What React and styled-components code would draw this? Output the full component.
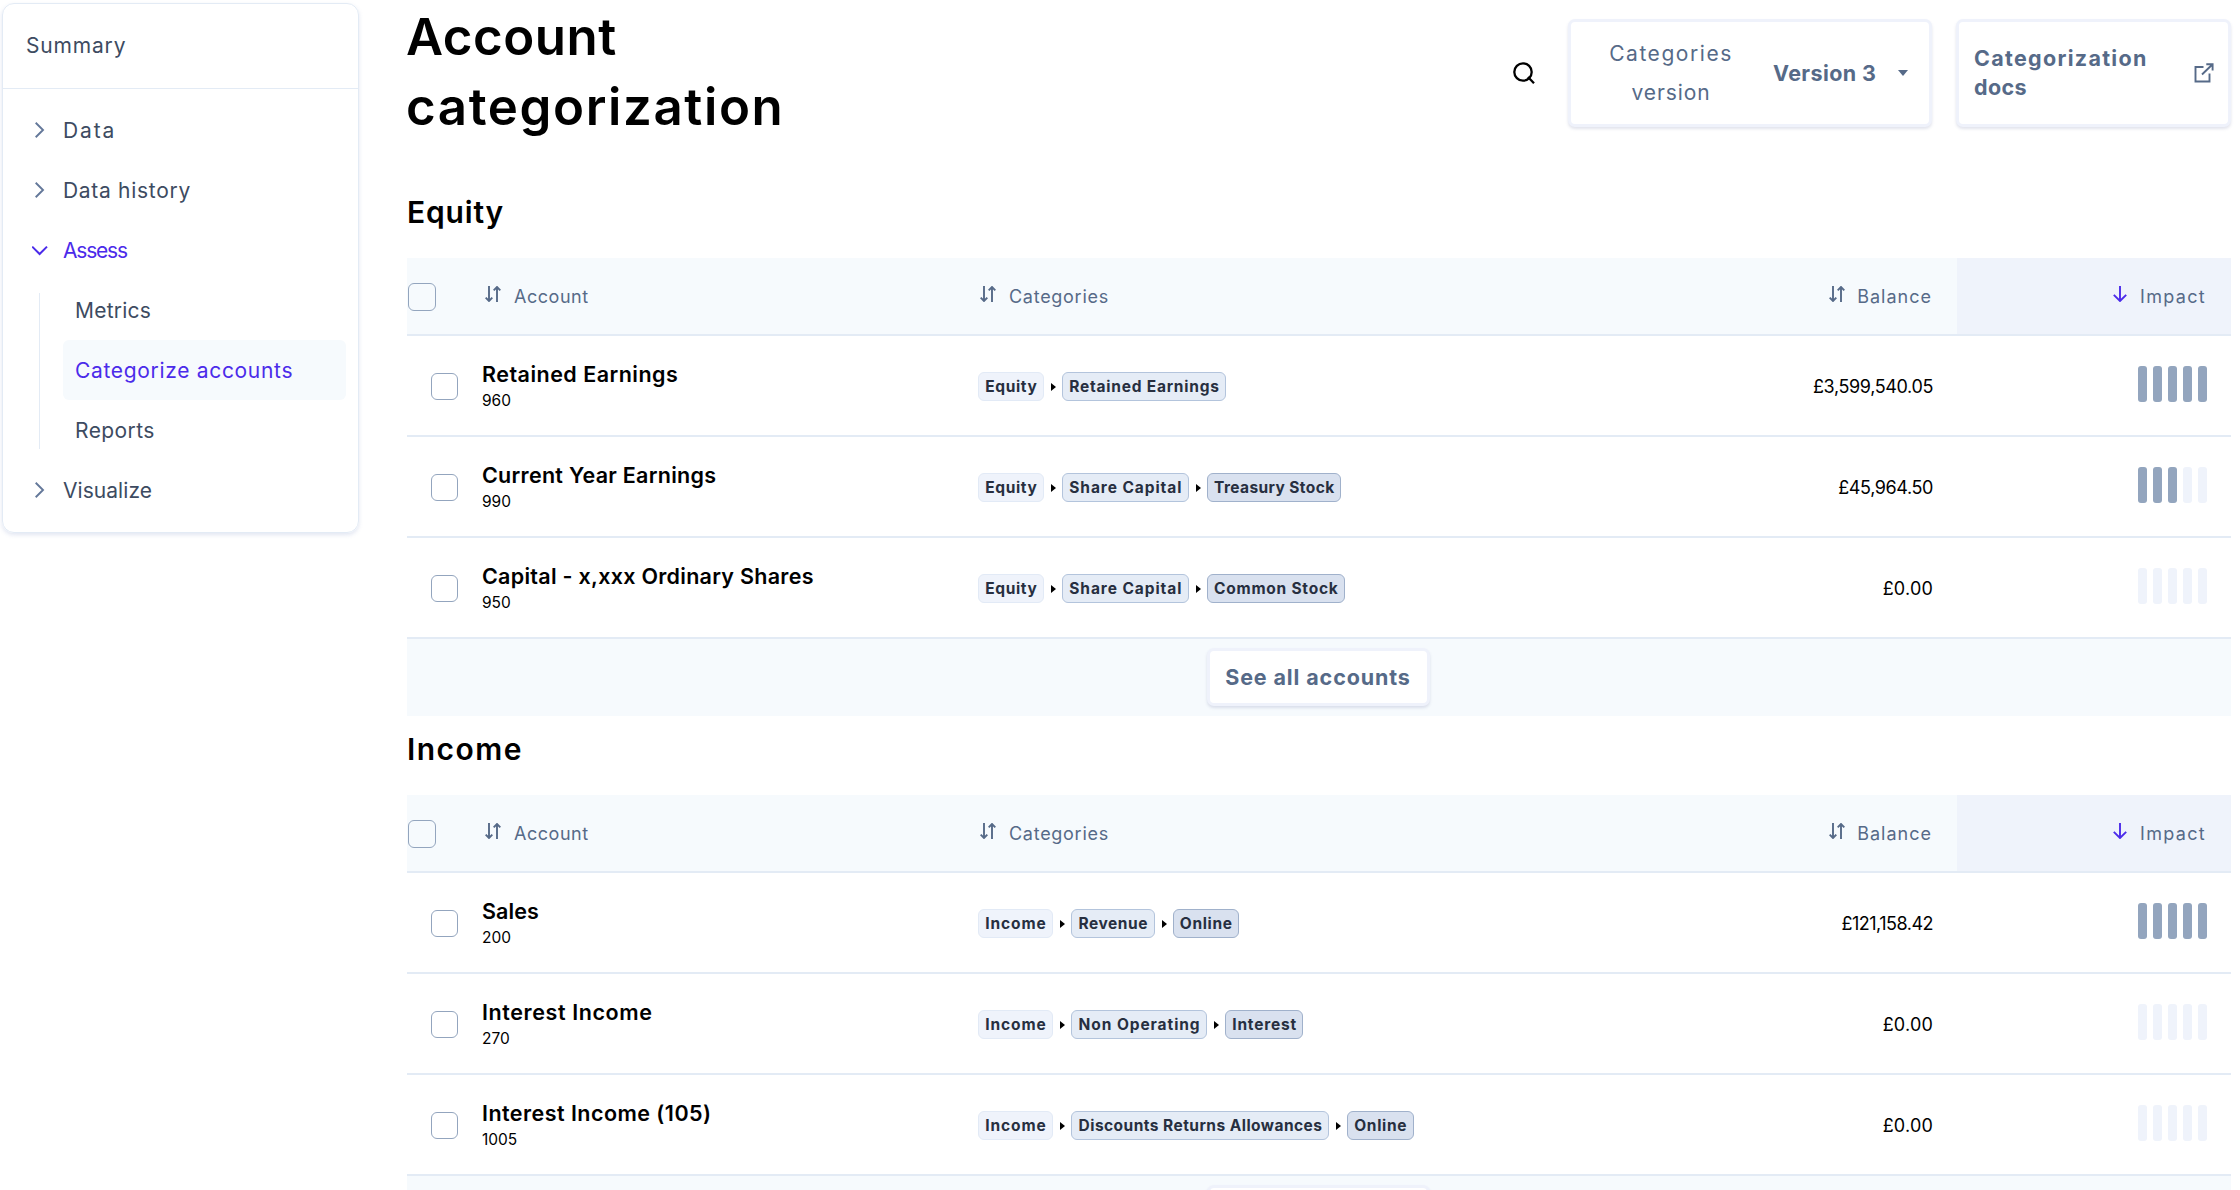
import React from "react";
import styled, { createGlobalStyle } from "styled-components";

const c = {
  text: "#3d4b61",
  muted: "#566a88",
  accent: "#4b2bea",
  line: "#e3ebf5",
  panel: "#f6fafd",
  soft: "#eff3fb",
  outline: "#93a5be",
};

const GlobalStyle = createGlobalStyle`
  * { box-sizing: border-box; }
  body {
    margin: 0;
    overflow: hidden;
    background: #fff;
    color: #000;
    font-family: Inter, "Liberation Sans", sans-serif;
  }
  svg { display: block; flex: none; }
  h1, h2 { margin: 0; }
`;

const Page = styled.div`
  display: flex;
  align-items: flex-start;
  height: 1190px;
  overflow: hidden;
`;

const Track = styled.span`
  letter-spacing: ${(p) => p.$ls || 0}px;
  white-space: nowrap;
`;

/* Sidebar */
const Sidebar = styled.aside`
  flex: none;
  width: 357px;
  margin: 3px 48px 0 2px;
  border: 1px solid ${c.line};
  border-radius: 12px;
  box-shadow: 0 2px 4px rgba(110, 130, 190, 0.2);
  color: ${c.text};
  font-size: 21px;
`;

const SidebarHeader = styled.div`
  padding-left: 23px;
  height: 85px;
  line-height: 84px;
  border-bottom: 1px solid ${c.line};
`;

const Nav = styled.nav`
  padding: 11px 12px 12px 29px;
`;

const NavItem = styled.div`
  display: flex;
  align-items: center;
  gap: ${(p) => (p.$tight ? 15 : 16)}px;
  height: 60px;
  color: ${(p) => (p.$active ? c.accent : c.text)};
  svg { color: ${(p) => (p.$active ? c.accent : "#64789a")}; }
`;

const SubNav = styled.div`
  display: flex;
`;

const Rail = styled.div`
  width: 1px;
  margin: 13px 23px 11px 7px;
  background: ${c.line};
`;

const SubList = styled.div`
  flex: 1;
`;

const SubItem = styled.div`
  height: 60px;
  padding-top: 1px;
  line-height: 60px;
  padding-left: 12px;
  border-radius: 6px;
  color: ${(p) => (p.$active ? c.accent : c.text)};
  background: ${(p) => (p.$active ? c.panel : "transparent")};
`;

/* Header */
const Main = styled.main`
  width: 1824px;
`;

const Header = styled.header`
  display: flex;
  justify-content: space-between;
  height: 179px;
`;

const Title = styled.h1`
  width: 420px;
  padding-top: 2px;
  font-size: 51px;
  line-height: 70px;
  font-weight: 600;
  margin-left: -1px;
`;

const Toolbar = styled.div`
  display: flex;
  align-items: center;
  height: 108px;
  margin-top: 19px;
`;

const SearchButton = styled.div`
  margin-right: 33px;
`;

const Card = styled.div`
  display: flex;
  align-items: center;
  background: #fff;
  border: 3px solid #eff2fb;
  border-radius: 7px;
  box-shadow: 0 2px 3px rgba(90, 100, 150, 0.18);
  color: ${c.muted};
  font-size: 21.5px;
  font-weight: 700;
`;

const VersionSelect = styled(Card)`
  width: 364px;
  height: 108px;
  margin-right: 24px;
  padding-left: 34px;
`;

const SelectLabel = styled.div`
  width: 132px;
  margin-right: 36px;
  text-align: center;
  font-size: 21px;
  line-height: 39px;
  font-weight: 400;
`;

const Caret = styled.span`
  margin-left: 22px;
  border: 5.5px solid transparent;
  border-top: 6px solid ${c.muted};
  border-bottom: 0;
`;

const DocsLink = styled(Card)`
  width: 275px;
  height: 108px;
  padding: 0 14px 0 15px;
  justify-content: space-between;
  line-height: 29px;
`;

/* Tables */
const SectionTitle = styled.h2`
  height: 79px;
  font-size: 30px;
  line-height: 66px;
  font-weight: 600;
`;

const gridColumns = "75px 496px 1fr 300px 274px";

const HeadRow = styled.div`
  display: grid;
  grid-template-columns: ${gridColumns};
  height: 78px;
  background: ${c.panel};
  border-bottom: 2px solid ${c.line};
`;

const HeadCell = styled.div`
  display: flex;
  align-items: center;
  justify-content: ${(p) => (p.$end ? "flex-end" : "flex-start")};
  padding: 0 ${(p) => (p.$end ? 25 : 0)}px 0 ${(p) => p.$left || 0}px;
  gap: ${(p) => p.$gap || 12}px;
  color: ${c.muted};
  background: ${(p) => (p.$sorted ? c.soft : "transparent")};
  font-size: 18px;
  svg { margin-top: -4px; }
`;

const Row = styled.div`
  display: grid;
  grid-template-columns: ${gridColumns};
  align-items: center;
  height: 101px;
  padding-top: 1px;
  border-bottom: 2px solid ${c.line};
`;

const Checkbox = styled.div`
  width: ${(p) => (p.$head ? 28 : 27)}px;
  height: ${(p) => (p.$head ? 28 : 27)}px;
  margin: ${(p) => (p.$head ? "2px 0 0 1px" : "1px 0 0 24px")};
  border: 1px solid ${c.outline};
  border-radius: 6px;
`;

const AccountName = styled.div`
  font-size: 21.5px;
  line-height: 29px;
  font-weight: 600;
`;

const AccountCode = styled.div`
  font-size: 15.5px;
  line-height: 24px;
`;

const Path = styled.div`
  display: flex;
  align-items: center;
`;

const chipTones = [
  ["#eff3fb", "#e2eaf6"],
  ["#e5ecf6", "#b3c4dc"],
  ["#d9e1ef", "#a0b1cb"],
];

const Chip = styled.span`
  height: 29px;
  padding: 0 5.6px 0 6.2px;
  border: 1px solid ${(p) => chipTones[p.$level][1]};
  border-radius: 6px;
  background: ${(p) => chipTones[p.$level][0]};
  color: #272f40;
  font-size: 15.5px;
  line-height: 27px;
  font-weight: 700;
`;

const Separator = styled.span`
  margin: 1px 6px 0 7px;
  border: 4.5px solid transparent;
  border-left: 5px solid #000;
  border-right: 0;
`;

const Balance = styled.div`
  padding-right: 24px;
  text-align: right;
  font-size: 18px;
`;

const Meter = styled.div`
  display: flex;
  justify-content: flex-end;
  gap: 6px;
  margin-top: -4px;
  padding-right: 24px;
`;

const Bar = styled.span`
  width: 9px;
  height: 36px;
  border-radius: 3px;
  background: ${(p) => (p.$on ? c.outline : c.soft)};
`;

const TableFooter = styled.div`
  display: flex;
  justify-content: center;
  align-items: flex-start;
  height: 77px;
  padding: 9px 2px 0 0;
  background: ${c.panel};
`;

const SeeAll = styled(Card)`
  width: 223px;
  height: 58px;
  justify-content: center;
`;

/* Icons */
const ChevronRight = () => (
  <svg width="15" height="16" viewBox="0 0 15 16" fill="none" stroke="currentColor" strokeWidth="1.9">
    <path d="M3.7 0.8 11 8 3.7 15.2" />
  </svg>
);

const ChevronDown = () => (
  <svg width="16" height="16" viewBox="0 0 16 16" fill="none" stroke="currentColor" strokeWidth="2">
    <path d="M0.2 4.6 7.6 12 15 4.6" />
  </svg>
);

const SortIcon = () => (
  <svg width="16" height="16" viewBox="0 0 16 16" fill="none" stroke="currentColor" strokeWidth="1.9">
    <path d="M4 0V15M0.7 11.6 4 15 7.3 11.6M12 16V1M8.7 4.4 12 1 15.3 4.4" />
  </svg>
);

const SortedDown = () => (
  <svg width="14" height="16" viewBox="0 0 14 16" fill="none" stroke={c.accent} strokeWidth="1.9">
    <path d="M7 0V15M0.8 8.8 7 15 13.2 8.8" />
  </svg>
);

const SearchIcon = () => (
  <svg width="22" height="22" viewBox="0 0 22 22" fill="none" stroke="#000" strokeWidth="2.3">
    <circle cx="10" cy="10" r="8.7" />
    <path d="M15 15 21 21.2" />
  </svg>
);

const ExternalIcon = () => (
  <svg width="20" height="20" viewBox="0 0 20 20" fill="none" stroke="currentColor" strokeWidth="1.9">
    <path d="M9.5 4H1.5V18.5H15.5V10.5M8 11.5 18.3 1.5M12.3 1.3H18.6V7.6" />
  </svg>
);

/* Data: labels are paired with their letter spacing */
const chips = {
  Equity: 0.65,
  "Retained Earnings": 0.77,
  "Share Capital": 0.92,
  "Treasury Stock": 0.4,
  "Common Stock": 0.76,
  Income: 0.93,
  Revenue: 0.53,
  Online: 0.67,
  "Non Operating": 0.92,
  Interest: 0.78,
  "Discounts Returns Allowances": 0.46,
};

const sections = [
  {
    title: ["Equity", 0.85],
    rows: [
      { name: ["Retained Earnings", 0.48], code: "960", path: ["Equity", "Retained Earnings"], balance: ["£3,599,540.05", -0.37], impact: 5 },
      { name: ["Current Year Earnings", 0.28], code: "990", path: ["Equity", "Share Capital", "Treasury Stock"], balance: ["£45,964.50", -0.4], impact: 3 },
      { name: ["Capital - x,xxx Ordinary Shares", 0.28], code: "950", path: ["Equity", "Share Capital", "Common Stock"], balance: ["£0.00", 0.2], impact: 0 },
    ],
  },
  {
    title: ["Income", 1.45],
    rows: [
      { name: ["Sales", 0.1], code: "200", path: ["Income", "Revenue", "Online"], balance: ["£121,158.42", -0.5], impact: 5 },
      { name: ["Interest Income", 0.6], code: "270", path: ["Income", "Non Operating", "Interest"], balance: ["£0.00", 0.2], impact: 0 },
      { name: ["Interest Income (105)", 0.46], code: "1005", path: ["Income", "Discounts Returns Allowances", "Online"], balance: ["£0.00", 0.2], impact: 0 },
    ],
  },
];

const AccountRow = ({ row }) => (
  <Row>
    <Checkbox />
    <div>
      <AccountName><Track $ls={row.name[1]}>{row.name[0]}</Track></AccountName>
      <AccountCode>{row.code}</AccountCode>
    </div>
    <Path>
      {row.path.map((label, i) => (
        <React.Fragment key={label}>
          {i > 0 && <Separator />}
          <Chip $level={i}><Track $ls={chips[label]}>{label}</Track></Chip>
        </React.Fragment>
      ))}
    </Path>
    <Balance><Track $ls={row.balance[1]}>{row.balance[0]}</Track></Balance>
    <Meter>
      {[0, 1, 2, 3, 4].map((i) => <Bar key={i} $on={i < row.impact} />)}
    </Meter>
  </Row>
);

const Section = ({ section }) => (
  <section>
    <SectionTitle><Track $ls={section.title[1]}>{section.title[0]}</Track></SectionTitle>
    <HeadRow>
      <HeadCell><Checkbox $head /></HeadCell>
      <HeadCell $left={3} $gap={13}><SortIcon /><Track $ls={0.54}>Account</Track></HeadCell>
      <HeadCell $left={2} $gap={13}><SortIcon /><Track $ls={0.72}>Categories</Track></HeadCell>
      <HeadCell $end><SortIcon /><Track $ls={1.0}>Balance</Track></HeadCell>
      <HeadCell $end $sorted $gap={13}><SortedDown /><Track $ls={1.3}>Impact</Track></HeadCell>
    </HeadRow>
    {section.rows.map((row) => <AccountRow key={row.name[0]} row={row} />)}
    <TableFooter>
      <SeeAll><Track $ls={0.88}>See all accounts</Track></SeeAll>
    </TableFooter>
  </section>
);

export default function App() {
  return (
    <Page>
      <GlobalStyle />
      <Sidebar>
        <SidebarHeader><Track $ls={0.83}>Summary</Track></SidebarHeader>
        <Nav>
          <NavItem><ChevronRight /><Track $ls={1.9}>Data</Track></NavItem>
          <NavItem><ChevronRight /><Track $ls={0.7}>Data history</Track></NavItem>
          <NavItem $active $tight><ChevronDown /><Track $ls={-1.2}>Assess</Track></NavItem>
          <SubNav>
            <Rail />
            <SubList>
              <SubItem><Track $ls={0.22}>Metrics</Track></SubItem>
              <SubItem $active><Track $ls={0.68}>Categorize accounts</Track></SubItem>
              <SubItem><Track $ls={0.42}>Reports</Track></SubItem>
            </SubList>
          </SubNav>
          <NavItem><ChevronRight /><Track $ls={0.05}>Visualize</Track></NavItem>
        </Nav>
      </Sidebar>
      <Main>
        <Header>
          <Title>
            <Track $ls={0.51}>Account</Track>{" "}
            <Track $ls={1.6}>categorization</Track>
          </Title>
          <Toolbar>
            <SearchButton><SearchIcon /></SearchButton>
            <VersionSelect>
              <SelectLabel>
                <Track $ls={1.55}>Categories</Track> <Track $ls={0.9}>version</Track>
              </SelectLabel>
              <Track $ls={0.4}>Version 3</Track>
              <Caret />
            </VersionSelect>
            <DocsLink>
              <div>
                <Track $ls={1.3}>Categorization</Track> <Track $ls={0.4}>docs</Track>
              </div>
              <ExternalIcon />
            </DocsLink>
          </Toolbar>
        </Header>
        {sections.map((s) => <Section key={s.title[0]} section={s} />)}
      </Main>
    </Page>
  );
}
